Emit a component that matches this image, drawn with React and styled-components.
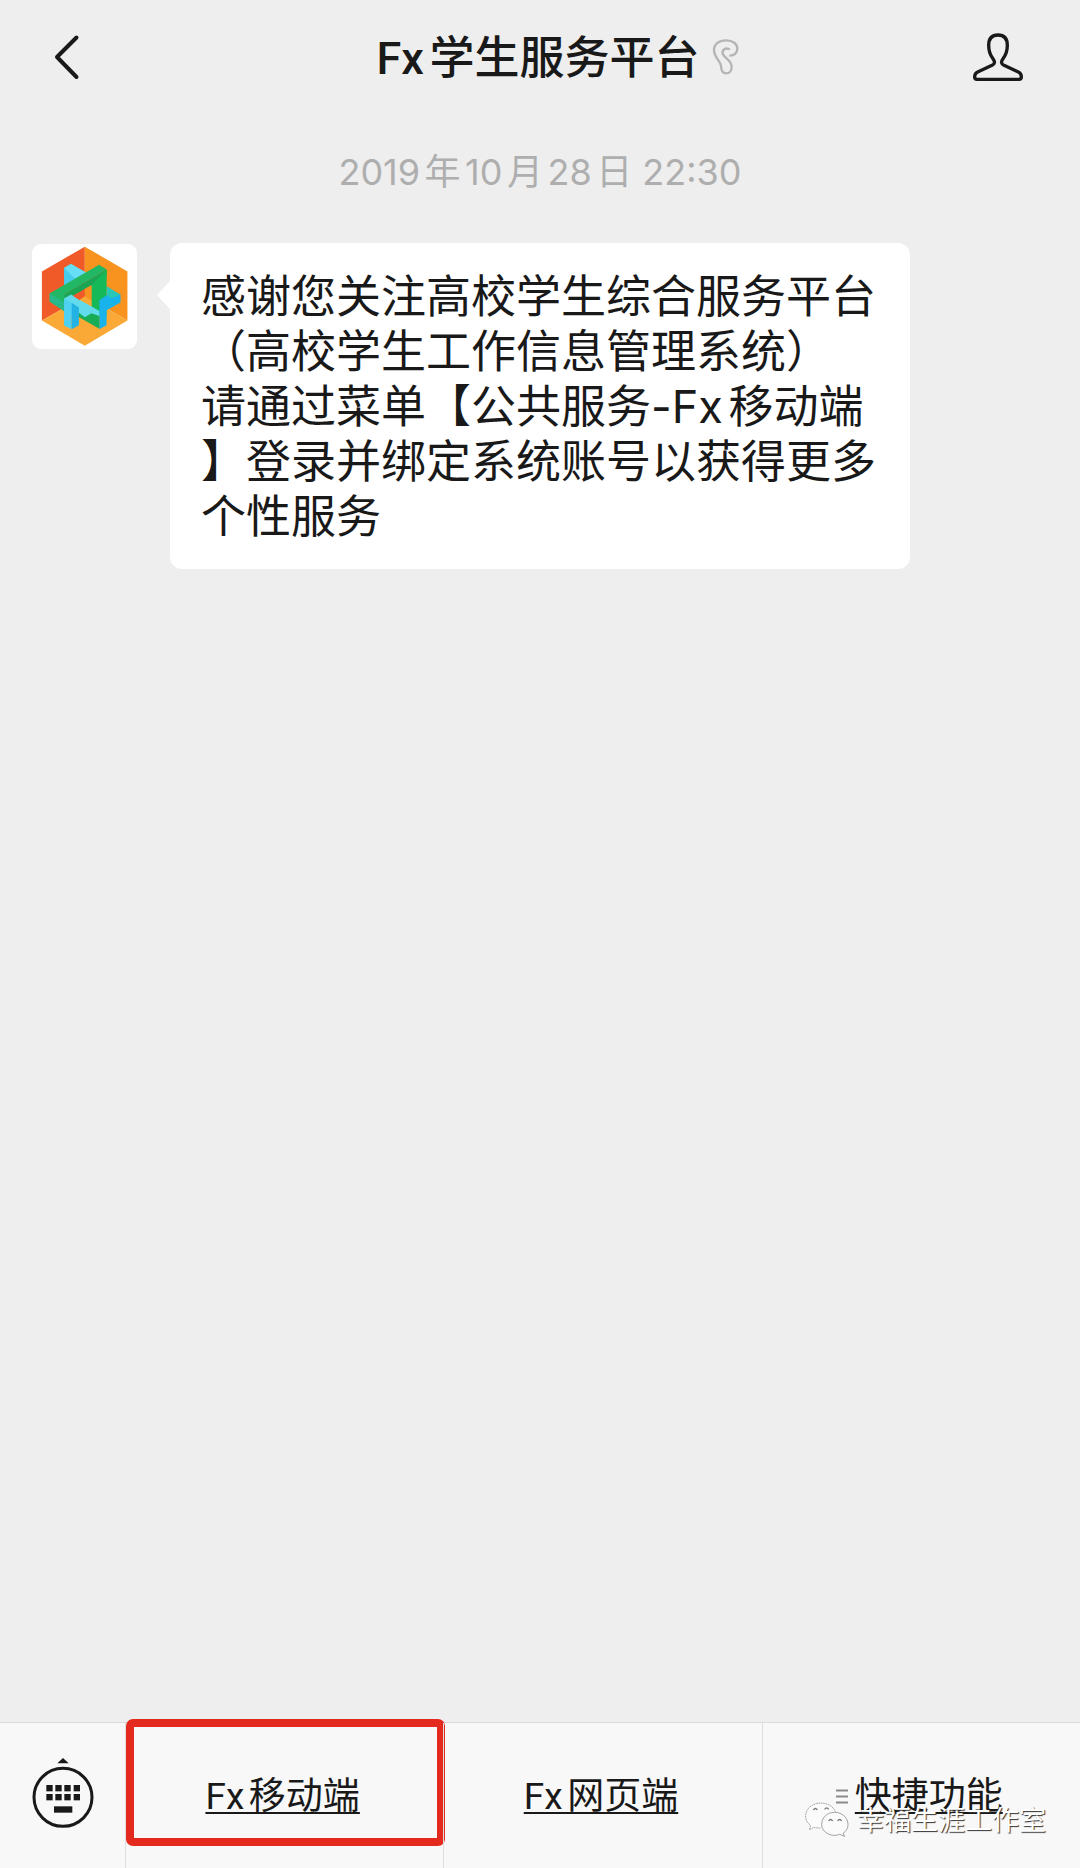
import React from "react";
import styled, { createGlobalStyle } from "styled-components";

const GlobalStyle = createGlobalStyle`
  * { box-sizing: border-box; }
  body {
    margin: 0;
    background: #eeeeee;
    color: #191919;
    font-family: Roboto, "Noto Sans CJK SC", sans-serif;
    text-autospace: normal;
  }
`;

const Page = styled.div`
  min-height: 100vh;
  display: flex;
  flex-direction: column;
`;

const Header = styled.header`
  display: grid;
  grid-template-columns: 1fr auto 1fr;
  align-items: center;
  height: 114px;
  padding: 0 56px 0 52px;
`;

const Title = styled.h1`
  margin: 0;
  padding-top: 4px;
  font-size: 45px;
  line-height: 56px;
  font-weight: 500;
`;

const HeaderEnd = styled.div`
  display: flex;
  align-items: center;
  justify-content: space-between;
  padding-left: 12px;
`;

const IconButton = styled.button`
  display: flex;
  justify-self: start;
  padding: 0;
  border: 0;
  background: none;
  color: inherit;
  cursor: pointer;
`;

const Chat = styled.main`
  flex: 1;
  display: flex;
  flex-direction: column;
`;

const Timestamp = styled.time`
  align-self: center;
  margin: 36px 0;
  color: #aeaeae;
  font-family: Inter, "Noto Sans CJK SC", sans-serif;
  font-size: 36px;
  line-height: 44px;
`;

const Message = styled.article`
  display: flex;
  align-items: flex-start;
  gap: 33px;
  margin-top: 13px;
  padding: 0 170px 0 32px;
`;

const Avatar = styled.svg`
  flex: none;
  width: 105px;
  height: 105px;
  margin-top: 1px;
  border-radius: 9px;
  background: #ffffff;
`;

const Bubble = styled.p`
  position: relative;
  flex: 1;
  margin: 0;
  padding: 26px 30px 25px 31px;
  border-radius: 12px;
  background: #ffffff;
  font-family: Inter, "Noto Sans CJK SC", sans-serif;
  font-size: 45px;
  line-height: 55px;

  &::before {
    content: "";
    position: absolute;
    top: 38px;
    right: 100%;
    width: 13px;
    height: 28px;
    background: #ffffff;
    clip-path: polygon(100% 0, 0 50%, 100% 100%);
  }
`;

const Line = styled.span`
  display: block;
  white-space: nowrap;
`;

const MenuBar = styled.nav`
  position: relative;
  display: grid;
  grid-template-columns: 125px repeat(3, 1fr);
  height: 146px;
  border-top: 1px solid #dadada;
  background: #f8f8f8;
`;

const MenuCell = styled.div`
  position: relative;
  display: flex;
  align-items: center;
  justify-content: center;
  gap: 7px;
  padding: ${(p) => (p.$first ? "0 0 6px" : "2px 4px 0 0")};
  border-left: ${(p) => (p.$first ? "0" : "1px solid #dedede")};
`;

const MenuLink = styled.a`
  color: inherit;
  font-size: 37px;
  line-height: 48px;
  text-decoration: underline;
  text-decoration-thickness: 2px;
  text-decoration-skip-ink: none;
  text-underline-offset: 3px;
`;

const Highlight = styled.span`
  position: absolute;
  top: -4px;
  left: 0;
  right: -2px;
  height: 127px;
  border: 8px solid #e42a1e;
  border-radius: 7px;
  pointer-events: none;
`;

const Watermark = styled.div`
  position: absolute;
  right: 34px;
  bottom: 27px;
  display: flex;
  align-items: center;
  gap: 8px;
  color: #ffffff;
  font-size: 27px;
  line-height: 40px;
  text-shadow: 1px 1px 1px #333333;
  pointer-events: none;
`;

const BackIcon = () => (
  <svg width="28" height="48" viewBox="0 0 28 48" fill="none" stroke="currentColor" strokeWidth="4" strokeLinecap="round" strokeLinejoin="round">
    <path d="M24.500 4.500 5 24l19.500 20" />
  </svg>
);

const EarIcon = () => (
  <svg width="30" height="40" viewBox="33 21 90 120" fill="none" stroke="#b4b4b4" strokeWidth="7" strokeLinecap="round" strokeLinejoin="round">
    <path d="M84 57C70 52 60 63 67 75C72 84 92 92 92 110C92 124 84 130 76 130C62 130 61 118 60 108C58 92 39 82 39 60C39 42 55 31 75 31C96 31 109 42 109 56C109 70 98 77 88 77" />
  </svg>
);

const PersonIcon = () => (
  <svg width="52" height="52" viewBox="0 0 156 156" fill="none" stroke="currentColor" strokeWidth="10" strokeLinejoin="round">
    <path d="M78 12C59 12 50 24 50 43C50 61 54 71 62 82C70 93 69 98 60 103L17 123Q8 127 8 137Q8 145 15 145H141Q148 145 148 137Q148 127 139 123L96 103C87 98 86 93 94 82C102 71 106 61 106 43C106 24 97 12 78 12Z" />
  </svg>
);

const KeyboardIcon = () => (
  <svg width="62" height="72" viewBox="0 0 186 216" fill="currentColor">
    <path d="M76 19 93 3l17 16z" />
    <circle cx="93" cy="121" r="87" fill="none" stroke="currentColor" strokeWidth="9" />
    {[84, 111].map((y) =>
      [43, 70, 97, 125].map((x) => <rect key={`${x}-${y}`} x={x} y={y} width="19" height="19" />)
    )}
    <rect x="66" y="148" width="55" height="19" />
  </svg>
);

const ListIcon = () => (
  <svg width="12" height="15" viewBox="0 0 12 15" stroke="#8a8a8a" strokeWidth="2">
    <path d="M0 1.500h12M0 7.500h12M0 13.500h12" />
  </svg>
);

const Logo = () => (
  <Avatar viewBox="0 0 318 318" role="img" aria-label="Fx学生服务平台">
    <path fill="#f05a28" d="M160 8 30 83v149l130-74z" />
    <path fill="#f7931e" d="M160 8 289 83v149l-129-74z" />
    <path fill="#fba936" d="M30 232 160 158l129 74-129 76z" />
    <path fill="#45cdeb" d="M97 72v60h40V92z" />
    <path fill="#66def5" d="M97 72 118 60l46 26-33 20z" />
    <path fill="#28b98a" d="M53 150 118 153 97 166v38l-44-30z" />
    <path fill="#22b765" d="M53 150 203 63l23 14-128 76v24z" />
    <path fill="#19a553" d="M98 153 226 77v22L118 160l-20 12z" />
    <path fill="#16b958" d="M180 125 226 77v140h-46z" />
    <path fill="#28c7b7" d="M226 128 268 153l-30 18-12-8z" />
    <path fill="#19b3ec" d="M204 170 226 155l14 10 28-12v24l-42 24v45l-22 12z" />
    <path fill="#18ad54" d="M140 206 166 196l38 22v39l-64-37z" />
    <path fill="#62dced" d="M97 165 118 153l86 50v15l-24-8-20 12-18-14-22 12z" />
    <path fill="#4fd2f2" d="M97 165 120 178v80l-23-11z" />
    <path fill="#23b2e4" d="M120 178 142 192v54l-22 12z" />
    <path fill="#f05a28" d="M126 158 160 136v24l-16 10z" />
    <path fill="#f7931e" d="M160 136 180 125v48l-20-14z" />
    <path fill="#fba936" d="M144 169 160 158l20 14v16z" />
  </Avatar>
);

const ChatMark = () => (
  <svg width="44" height="38" viewBox="0 0 132 114" fill="#fbfbfb" stroke="#777777" strokeWidth="2">
    <path d="M46 78Q35 78 27 76L13 83 17 70C-5 55-2 25 20 11C45-5 82 5 91 29" strokeDasharray="5 2" />
    <path d="M119 103 104 97C81 107 50 92 50 68C50 46 67 31 89 31C111 31 129 47 129 68C129 79 123 88 114 94Z" />
    <path d="M25 24q6-9 12 0M59 22q6-9 12 0M71 57q6-9 12 0M98 57q6-9 12 0" fill="none" strokeWidth="4" />
  </svg>
);

const lines = [
  "感谢您关注高校学生综合服务平台",
  "（高校学生工作信息管理系统）",
  "请通过菜单【公共服务-Fx移动端",
  "】登录并绑定系统账号以获得更多",
  "个性服务",
];

const menu = [
  { label: "Fx移动端", highlighted: true },
  { label: "Fx网页端" },
  { label: "快捷功能", list: true },
];

export default function App() {
  return (
    <Page>
      <GlobalStyle />
      <Header>
        <IconButton type="button" aria-label="返回"><BackIcon /></IconButton>
        <Title>Fx学生服务平台</Title>
        <HeaderEnd>
          <EarIcon />
          <IconButton type="button" aria-label="账号资料"><PersonIcon /></IconButton>
        </HeaderEnd>
      </Header>
      <Chat>
        <Timestamp dateTime="2019-10-28T22:30">2019年10月28日 22:30</Timestamp>
        <Message>
          <Logo />
          <Bubble>
            {lines.map((line) => <Line key={line}>{line}</Line>)}
          </Bubble>
        </Message>
      </Chat>
      <MenuBar>
        <MenuCell $first>
          <IconButton type="button" aria-label="键盘"><KeyboardIcon /></IconButton>
        </MenuCell>
        {menu.map((item) => (
          <MenuCell key={item.label}>
            {item.list && <ListIcon />}
            <MenuLink href="#">{item.label}</MenuLink>
            {item.highlighted && <Highlight />}
          </MenuCell>
        ))}
        <Watermark>
          <ChatMark />
          幸福生涯工作室
        </Watermark>
      </MenuBar>
    </Page>
  );
}
